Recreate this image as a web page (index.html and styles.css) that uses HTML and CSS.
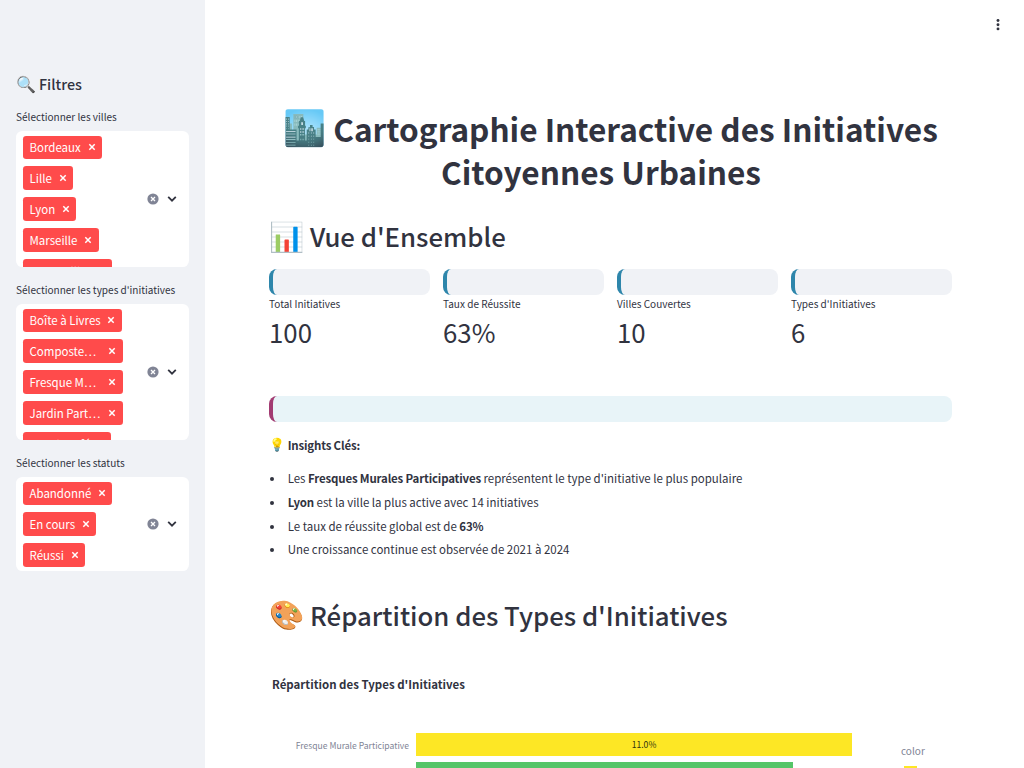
FILE: index.html
```
<!DOCTYPE html>
<html lang="fr">
<head>
<meta charset="utf-8">
<title>Cartographie Interactive des Initiatives Citoyennes Urbaines</title>
<link rel="stylesheet" href="styles.css">
</head>
<body>
<svg class="defs" width="0" height="0">
  <symbol id="x" viewBox="0 0 8 8"><path d="M1.3 1.3 6.7 6.7M6.7 1.3 1.3 6.7" fill="none" stroke="currentColor" stroke-width="1.5"/></symbol>
  <symbol id="clear" viewBox="0 0 12 12"><circle cx="6" cy="6" r="5.6" fill="#808495"/><path d="M4 4 8 8M8 4 4 8" stroke="#fff" stroke-width="1.3"/></symbol>
  <symbol id="chev" viewBox="0 0 10 8"><path d="M1.2 1.9 5 5.7 8.8 1.9" fill="none" stroke="#31333f" stroke-width="1.8"/></symbol>
</svg>
<div class="app">
  <aside class="sidebar">
    <h2 class="side-title"><span class="emoji">🔍</span><span class="t-filtres">Filtres</span></h2>
    <label class="label">Sélectionner les villes</label>
    <div class="select tall">
      <div class="tags">
        <div class="tag" style="width:79px"><span>Bordeaux</span><svg><use href="#x"/></svg></div>
        <div class="tag" style="width:50px"><span>Lille</span><svg><use href="#x"/></svg></div>
        <div class="tag" style="width:53px"><span>Lyon</span><svg><use href="#x"/></svg></div>
        <div class="tag" style="width:75.5px"><span>Marseille</span><svg><use href="#x"/></svg></div>
        <div class="tag" style="width:89px"><span>Montpellier</span><svg><use href="#x"/></svg></div>
      </div>
      <svg class="clear"><use href="#clear"/></svg><svg class="chev"><use href="#chev"/></svg>
    </div>
    <label class="label">Sélectionner les types d'initiatives</label>
    <div class="select tall">
      <div class="tags">
        <div class="tag" style="width:98.5px"><span>Boîte à Livres</span><svg><use href="#x"/></svg></div>
        <div class="tag" style="width:99.5px"><span>Composte…</span><svg><use href="#x"/></svg></div>
        <div class="tag" style="width:99.5px"><span>Fresque M…</span><svg><use href="#x"/></svg></div>
        <div class="tag" style="width:99.5px"><span>Jardin Part…</span><svg><use href="#x"/></svg></div>
        <div class="tag" style="width:88px"><span>Repair Café</span><svg><use href="#x"/></svg></div>
      </div>
      <svg class="clear"><use href="#clear"/></svg><svg class="chev"><use href="#chev"/></svg>
    </div>
    <label class="label">Sélectionner les statuts</label>
    <div class="select short">
      <div class="tags">
        <div class="tag" style="width:89px"><span>Abandonné</span><svg><use href="#x"/></svg></div>
        <div class="tag" style="width:73px"><span>En cours</span><svg><use href="#x"/></svg></div>
        <div class="tag" style="width:62px"><span>Réussi</span><svg><use href="#x"/></svg></div>
      </div>
      <svg class="clear"><use href="#clear"/></svg><svg class="chev"><use href="#chev"/></svg>
    </div>
  </aside>
  <main class="main">
    <header class="toolbar"><svg width="4" height="14" viewBox="0 0 4 14"><g fill="#31333f"><circle cx="2" cy="2.5" r="1.45"/><circle cx="2" cy="6.7" r="1.45"/><circle cx="2" cy="10.9" r="1.45"/></g></svg></header>
    <h1>
      <span class="line1"><span class="emoji">🏙️</span><span>Cartographie Interactive des Initiatives</span></span>
      <span class="line2">Citoyennes Urbaines</span>
    </h1>
    <h2 class="section"><span class="emoji">📊</span><span>Vue d'Ensemble</span></h2>
    <div class="metrics">
      <div><div class="card"></div><div class="name">Total Initiatives</div><div class="value">100</div></div>
      <div><div class="card"></div><div class="name">Taux de Réussite</div><div class="value">63%</div></div>
      <div><div class="card"></div><div class="name">Villes Couvertes</div><div class="value">10</div></div>
      <div><div class="card"></div><div class="name">Types d'Initiatives</div><div class="value">6</div></div>
    </div>
    <div class="insight"></div>
    <p class="keys"><span class="emoji">💡</span><b>Insights Clés:</b></p>
    <ul>
      <li>Les <b>Fresques Murales Participatives</b> représentent le type d'initiative le plus populaire</li>
      <li><b>Lyon</b> est la ville la plus active avec 14 initiatives</li>
      <li>Le taux de réussite global est de <b>63%</b></li>
      <li>Une croissance continue est observée de 2021 à 2024</li>
    </ul>
    <h2 class="section second"><span class="emoji">🎨</span><span>Répartition des Types d'Initiatives</span></h2>
    <div class="chart-title">Répartition des Types d'Initiatives</div>
    <div class="chart">
      <div class="axis">Fresque Murale Participative</div>
      <div class="bars"><div class="bar yellow" style="width:436px">11.0%</div><div class="bar green" style="width:376.5px"></div></div>
      <div class="legend">color<i></i></div>
    </div>
  </main>
</div>
</body>
</html>
```
FILE: styles.css
```
* { box-sizing: border-box; }
html, body { margin: 0; height: 768px; overflow: hidden; }
body {
  font-family: "Source Sans Pro", "Noto Sans CJK SC", "Noto Sans", sans-serif;
  color: #31333f;
  background: #fff;
  font-size: 11.47px;
}
.defs { position: absolute; }
.emoji { font-family: "Noto Color Emoji", sans-serif; font-weight: 400; }
.app { display: flex; height: 768px; overflow: hidden; }

.sidebar { width: 205px; flex: none; background: #f0f2f6; padding: 72px 16px 0; }
.side-title { display: flex; gap: 4px; margin: 0 0 11px; height: 24px; line-height: 24px; font-size: 14.34px; font-weight: 500; }
.side-title .emoji { font-size: 16px; width: 19px; padding-top: 0.6px; }
.label { display: block; height: 20px; line-height: 20px; margin-bottom: 4px; font-size: 10.04px; white-space: nowrap; }
.select { display: flex; align-items: center; width: 173px; background: #fff; border-radius: 6.4px; margin-bottom: 13px; overflow: hidden; }
.tall { height: 136px; }
.short { height: 94px; }
.tags { width: 124px; height: 100%; padding: 4.5px 0 0 7px; display: flex; flex-direction: column; gap: 7.8px; overflow: hidden; }
.tag { flex: none; height: 23.2px; border-radius: 3.2px; background: #ff4b4b; color: #fff; display: flex; align-items: center; justify-content: space-between; padding: 0 6.5px; white-space: nowrap; }
.tag span { line-height: 22px; height: 23px; }
.tag svg { width: 8px; height: 8px; }
.clear { width: 12px; height: 12px; margin-left: 7px; }
.chev { width: 10px; height: 8px; margin-left: 8px; }

.main { flex: 1; padding: 0 72px 0 64px; height: 768px; overflow: hidden; }
.toolbar { height: 107px; margin-right: -48px; padding-top: 18px; display: flex; justify-content: flex-end; }
h1 { margin: 0; height: 87px; line-height: 43.3px; font-size: 31.57px; font-weight: 700; text-align: center; white-space: nowrap; }
.line1 { display: flex; justify-content: center; height: 43.3px; gap: 8px; }
.line1 .emoji { font-size: 34.6px; width: 42px; }
.line2 { display: block; height: 43.3px; padding-right: 19px; }
.section { display: flex; gap: 6px; margin: 20px 0 0; height: 44px; line-height: 44px; font-size: 25.74px; font-weight: 500; white-space: nowrap; }
.section .emoji { width: 35px; font-size: 28.4px; padding-top: 1.6px; }
.metrics { display: grid; grid-template-columns: repeat(4, 161px); gap: 13px; margin-top: 10.6px; }
.card { height: 26px; border-radius: 8px; border-left: 4px solid #2e86ab; background: #f0f2f6; }
.name { height: 18px; line-height: 17px; font-size: 10.04px; }
.value { height: 41px; line-height: 38px; font-size: 25.8px; }
.insight { margin-top: 42.3px; height: 26px; border-radius: 8px; border-left: 4px solid #a23b72; background: #e8f4f8; }
.keys { display: flex; margin: 13px 0 12.4px; height: 20px; line-height: 20px; }
.keys .emoji { width: 18.7px; font-size: 12.8px; }
b { font-weight: 700; letter-spacing: -0.17px; }
ul { margin: 0; padding: 0; list-style: none; }
li { display: block; height: 23.65px; line-height: 23.65px; white-space: nowrap; }
li::before { content: ""; display: inline-block; width: 4px; height: 4px; margin: 0 14.2px 2px 0.5px; border-radius: 50%; background: #31333f; }
.second { margin-top: 31px; }
.chart-title { margin: 37px 0 0 3px; height: 20px; line-height: 20px; font-weight: 700; }
.chart { display: flex; margin-top: 39px; height: 60px; }
.axis { width: 140px; margin-right: 7px; text-align: right; line-height: 24px; font-size: 8.6px; color: #808495; white-space: nowrap; }
.bars { width: 485px; display: flex; flex-direction: column; gap: 6px; }
.bar { height: 23.6px; line-height: 23px; text-align: center; font-size: 8.6px; }
.yellow { background: #fde725; color: #31330f; padding-left: 20px; }
.green { background: #55c568; }
.legend { padding-top: 8px; line-height: 20px; font-size: 10.04px; color: #808495; }
.legend i { display: block; width: 13px; height: 12px; margin: 5px 0 0 3px; background: #fde725; }
```
